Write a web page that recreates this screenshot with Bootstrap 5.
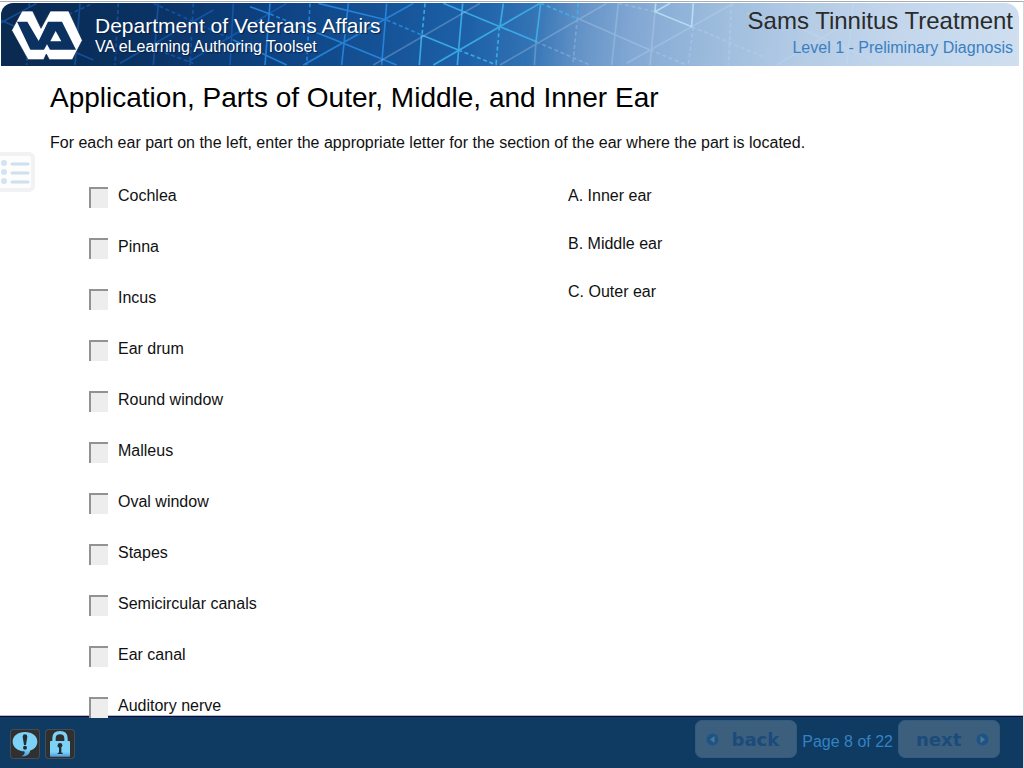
<!DOCTYPE html>
<html lang="en">
<head>
<meta charset="utf-8">
<meta name="viewport" content="width=device-width, initial-scale=1">
<title>Sams Tinnitus Treatment</title>
<link href="https://cdn.jsdelivr.net/npm/bootstrap@5.3.0/dist/css/bootstrap.min.css" rel="stylesheet">
<style>
  body { font-family: "Liberation Sans", Arial, sans-serif; color: #111; line-height: 18px; background: #fff; padding-top: 1px; }
  .shell { min-height: calc(100vh - 1px); border-top: 1px solid #a9acac; border-right: 1px solid #d6d6d6; }
  .banner {
    margin: 1px 4px 0 1px; padding: 4px 6px 1px 7px; min-height: 63px;
    border-radius: 12px 14px 0 0; color: #fff;
    background: linear-gradient(95deg, #0a2a50 0%, #0b3263 14%, #0e4180 26%, #165296 37%, #1e61a8 46%, #3474b5 52%, #6694c8 57%, #82a8d4 62%, #9dbcdd 70%, #b5cce6 79%, #c3d6ec 88%, #cfdff0 100%);
  }
  .banner-art { fill: none; stroke-width: 5; }
  .banner-text { z-index: 1; }
  .brand-mark { width: 80px; height: 58px; }
  .brand-row { gap: 7px; }
  .brand-words { padding-top: 8px; }
  .brand-name { font-size: 21px; line-height: 22px; text-shadow: 1px 1px 1px #06204a; }
  .brand-sub { font-size: 16px; line-height: 19px; text-shadow: 1px 1px 1px #06204a; }
  .course { color: #2b2b2b; font-size: 24px; line-height: 28px; }
  .lesson { color: #3a80c0; font-size: 16px; line-height: 26px; }
  .toc-tab { left: 0; top: 152px; width: 35px; height: 40px; background: #fdfdfd; border: 4px solid #f0f2f3; border-left: 0; border-radius: 0 6px 6px 0; z-index: 2; }
  .lesson-body { padding: 15px 50px 0; z-index: 1; }
  .lesson-body h1 { font-size: 28px; line-height: 34px; margin: 0 0 19px; font-weight: 400; color: #000; }
  .matching { padding-left: 39px; margin-top: 35px; }
  .answers, .choices { gap: 30px; }
  .choices { padding-left: 37px; }
  .answer { gap: 10px; height: 21px; }
  .answer label { line-height: 18px; height: 21px; }
  .answer input { width: 19px; height: 21px; padding: 1px; background: #ededed; border: 0 solid #929292; border-width: 2px 0 0 2px; border-radius: 0; }
  .footer-bar { min-height: 53px; margin-top: -3px; padding: 0 23px 6px 10px; background: #0f3a61; border-top: 1px solid #b9bccb; box-shadow: inset 0 1px #0b0b42; }
  .tool-btn { width: 30px; height: 30px; }
  .tools { gap: 5px; margin-top: 10px; }
  .pager { gap: 5px; }
  .page-btn { height: 38px; width: 102px; background: #3d5f7e; border: 1px solid #335b80; border-radius: 7px; color: #1a4b7b; font: bold 18px "DejaVu Sans", Verdana, sans-serif; }
  .page-back { padding: 0 17px 0 10px; }
  .page-next { padding: 0 10px 0 17px; }
  .page-count { color: #3283c6; font-size: 16px; padding-top: 6px; }
</style>
</head>
<body>
<div class="shell d-flex flex-column">
  <header class="banner position-relative overflow-hidden d-flex justify-content-between align-items-start">
    <svg class="banner-art position-absolute top-0 start-0 w-100 h-100" viewBox="3 9 3054 189" preserveAspectRatio="xMinYMin slice" aria-hidden="true">
      <g stroke="#1c6fd0" opacity=".5">
        <path d="M0 70 110 10M240 10 225 195M475 10 460 195M700 10 690 195M360 190 640 30M565 185 860 10M0 60 280 180"/>
        <path stroke-dasharray="12 8" d="M88 10 80 195M355 10 345 195M580 10 570 195M460 10 700 120M420 130 580 190M60 110 280 10"/>
      </g>
      <g stroke="#2a8fe8" opacity=".8">
        <path d="M810 10 795 195M1045 10 1025 195M1160 10 1145 195M910 195 1240 10M750 20 810 42M955 10 1160 60M700 120 860 195M1030 130 1190 195M1030 130 930 90"/>
        <path stroke-dasharray="12 8" d="M930 10 920 195M810 42 930 90M1160 60 1265 105"/>
      </g>
      <g stroke="#3fb4ee" opacity=".85">
        <path d="M1265 105 1258 195M1388 10 1372 195M1300 195 1620 10M1330 10 1500 80 1610 125M1265 105 1375 150M1622 10 1608 125M1510 10 1500 80"/>
        <path stroke-dasharray="12 8" d="M1275 10 1266 105M1498 80 1488 195M1375 150 1490 195M1622 10 1732 55M1734 10 1732 55"/>
      </g>
      <path stroke="#b9e8f5" opacity=".8" d="M1967 10 1965 35 2075 80 2080 10M1965 35 2010 10"/>
      <g stroke="#c7def5" opacity=".28">
        <path d="M1120 195 1440 10M1500 195 1820 10M1880 190 2200 10M2330 195 2640 10M1732 55 1950 150M1855 10 1835 195M1965 35 1950 195M2240 40 2410 90 2620 180M2560 10 2540 195M1608 125 1603 195"/>
        <path stroke-dasharray="12 8" d="M1608 125 1770 195M1732 55 1718 195M1950 150 2060 195M2080 80 2065 195M2075 80 2290 170M1855 10 1965 35M2195 10 2185 195"/>
      </g>
    </svg>
    <div class="banner-text position-relative d-flex brand-row">
      <svg class="brand-mark flex-shrink-0" viewBox="0 2 240 174" role="img" aria-label="VA">
        <path fill="#fff" stroke="#071f45" stroke-width="2" d="M42 14H74L99 66 127 14H182L223 102 193 160H124L115 143 107 160H60L11 72Z"/>
        <path fill="#0b3161" d="M27 46H58L92 104 120 46H162L204 130H126L117 114 108 130H67Z"/>
        <path fill="#fff" d="M143 74 160 105H127Z"/>
      </svg>
      <div class="brand-words text-nowrap">
        <div class="brand-name">Department of Veterans Affairs</div>
        <div class="brand-sub">VA eLearning Authoring Toolset</div>
      </div>
    </div>
    <div class="banner-text position-relative text-end text-nowrap">
      <div class="course">Sams Tinnitus Treatment</div>
      <div class="lesson">Level 1 - Preliminary Diagnosis</div>
    </div>
  </header>

  <button type="button" class="toc-tab position-absolute p-0 d-flex" aria-label="Table of contents">
    <svg width="31" height="32" viewBox="0 0 31 32" aria-hidden="true">
      <g fill="#d3e3f0"><circle cx="4" cy="7" r="3"/><circle cx="4" cy="16" r="3"/><circle cx="4" cy="25" r="3"/></g>
      <path stroke="#cfe0ee" stroke-width="3" stroke-linecap="round" d="M12 8H28M12 17H28M12 26H28"/>
    </svg>
  </button>

  <main class="lesson-body position-relative flex-grow-1">
    <h1>Application, Parts of Outer, Middle, and Inner Ear</h1>
    <p class="mb-0">For each ear part on the left, enter the appropriate letter for the section of the ear where the part is located.</p>
    <div class="matching">
      <div class="row g-0">
        <div class="col-6 d-flex flex-column answers">
          <div class="answer d-flex align-items-center"><input id="p1" type="text" maxlength="1"><label for="p1">Cochlea</label></div>
          <div class="answer d-flex align-items-center"><input id="p2" type="text" maxlength="1"><label for="p2">Pinna</label></div>
          <div class="answer d-flex align-items-center"><input id="p3" type="text" maxlength="1"><label for="p3">Incus</label></div>
          <div class="answer d-flex align-items-center"><input id="p4" type="text" maxlength="1"><label for="p4">Ear drum</label></div>
          <div class="answer d-flex align-items-center"><input id="p5" type="text" maxlength="1"><label for="p5">Round window</label></div>
          <div class="answer d-flex align-items-center"><input id="p6" type="text" maxlength="1"><label for="p6">Malleus</label></div>
          <div class="answer d-flex align-items-center"><input id="p7" type="text" maxlength="1"><label for="p7">Oval window</label></div>
          <div class="answer d-flex align-items-center"><input id="p8" type="text" maxlength="1"><label for="p8">Stapes</label></div>
          <div class="answer d-flex align-items-center"><input id="p9" type="text" maxlength="1"><label for="p9">Semicircular canals</label></div>
          <div class="answer d-flex align-items-center"><input id="p10" type="text" maxlength="1"><label for="p10">Ear canal</label></div>
          <div class="answer d-flex align-items-center"><input id="p11" type="text" maxlength="1"><label for="p11">Auditory nerve</label></div>
        </div>
        <div class="col-6 d-flex flex-column choices">
          <div>A. Inner ear</div>
          <div>B. Middle ear</div>
          <div>C. Outer ear</div>
        </div>
      </div>
    </div>
  </main>

  <footer class="footer-bar d-flex justify-content-between align-items-center">
    <div class="tools d-flex">
      <button type="button" class="tool-btn btn p-0 border-0 d-flex" aria-label="Comments">
        <svg width="30" height="30" viewBox="0 0 90 90" aria-hidden="true">
          <defs><linearGradient id="ice" x1="0" y1="0" x2="0" y2="1"><stop offset=".7" stop-color="#7dd3f7"/><stop offset="1" stop-color="#4a9be0"/></linearGradient></defs>
          <rect x="1" y="1" width="88" height="88" rx="10" fill="#303030" stroke="#4b5258" stroke-width="3"/>
          <path fill="url(#ice)" d="M45 9C24 9 8 21 8 38S24 66 43 67C46 72 43 78 34 82 50 83 59 75 60 65 74 60 82 50 82 38 82 21 66 9 45 9Z"/>
          <path fill="#252c31" d="M38 23Q38 16 45 16T52 23L48 48H42Z"/><circle cx="45" cy="56" r="6" fill="#252c31"/>
        </svg>
      </button>
      <button type="button" class="tool-btn btn p-0 border-0 d-flex" aria-label="Lock">
        <svg width="30" height="30" viewBox="0 0 90 90" aria-hidden="true">
          <rect x="1" y="1" width="88" height="88" rx="10" fill="#303030" stroke="#4b5258" stroke-width="3"/>
          <path fill="none" stroke="#7dd3f7" stroke-width="10" d="M27 38V28Q27 11 45 11T63 28V38"/>
          <rect x="15" y="36" width="60" height="47" rx="2" fill="url(#ice)"/>
          <circle cx="45" cy="49" r="7" fill="#252c31"/><path fill="#252c31" d="M38 51H49V71H53V75H38V71H42V55H38Z"/>
        </svg>
      </button>
    </div>
    <div class="pager d-flex align-items-center">
      <button type="button" class="page-btn page-back d-flex align-items-center justify-content-between">
        <svg width="13" height="13" viewBox="0 0 26 26" aria-hidden="true"><circle cx="13" cy="13" r="12" fill="#1c5487"/><path fill="#55758f" d="M17 6V20L8 13Z"/></svg>
        <span>back</span>
      </button>
      <span class="page-count">Page 8 of 22</span>
      <button type="button" class="page-btn page-next d-flex align-items-center justify-content-between">
        <span>next</span>
        <svg width="13" height="13" viewBox="0 0 26 26" aria-hidden="true"><circle cx="13" cy="13" r="12" fill="#1c5487"/><path fill="#55758f" d="M9 6V20L18 13Z"/></svg>
      </button>
    </div>
  </footer>
</div>
<script src="https://cdn.jsdelivr.net/npm/bootstrap@5.3.0/dist/js/bootstrap.bundle.min.js"></script>
</body>
</html>
